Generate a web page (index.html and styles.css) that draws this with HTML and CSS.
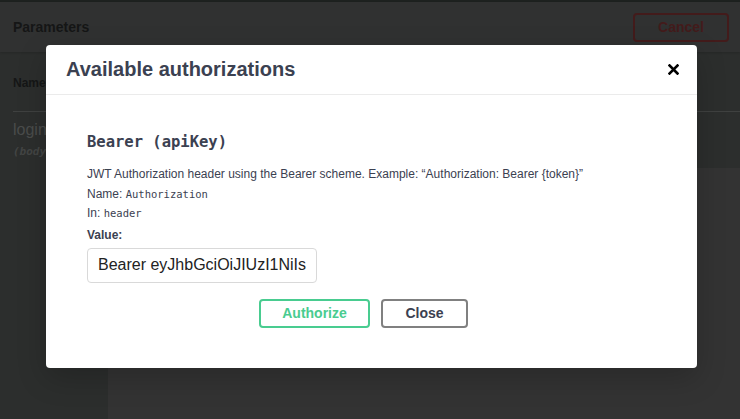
FILE: index.html
```html
<!DOCTYPE html>
<html>
<head>
<meta charset="utf-8">
<link rel="stylesheet" href="styles.css">
</head>
<body>
<div class="page">
  <div class="section-header">
    <span class="section-title">Parameters</span>
    <button class="btn-cancel">Cancel</button>
  </div>
  <div class="params">
    <div class="params-head"><span>Name</span></div>
    <div class="params-row">
      <div class="param-name">
        <div class="param-login">login</div>
        <div class="param-in">(body)</div>
      </div>
      <div class="param-body"></div>
    </div>
  </div>
</div>

<div class="modal" role="dialog">
  <div class="modal-header">
    <h3 class="modal-title">Available authorizations</h3>
    <button class="modal-close" aria-label="Close">
      <svg width="11" height="11" viewBox="0 0 11 11"><path d="M1.5 1.5 L9.5 9.5 M9.5 1.5 L1.5 9.5" stroke="#000" stroke-width="2.6" stroke-linecap="square"/></svg>
    </button>
  </div>
  <div class="modal-body">
    <h4 class="auth-title">Bearer (apiKey)</h4>
    <p class="auth-line">JWT Authorization header using the Bearer scheme. Example: “Authorization: Bearer {token}”</p>
    <p class="auth-line">Name: <code>Authorization</code></p>
    <p class="auth-line">In: <code>header</code></p>
    <label class="auth-label">Value:</label>
    <input class="auth-input" type="text" value="Bearer eyJhbGciOiJIUzI1NiIsInR5cCI6IkpXVCJ9">
    <div class="auth-actions">
      <button class="btn btn-authorize">Authorize</button>
      <button class="btn btn-close">Close</button>
    </div>
  </div>
</div>
</body>
</html>
```

FILE: styles.css
```css
html, body {
  margin: 0;
  padding: 0;
}
body {
  width: 740px;
  height: 419px;
  overflow: hidden;
  background: #2c2e2d;
  font-family: "Liberation Sans", Arial, sans-serif;
  position: relative;
}
.page {
  border-top: 2px solid #1d211f;
  height: 417px;
  display: flex;
  flex-direction: column;
}
.section-header {
  height: 50px;
  background: #303131;
  display: flex;
  align-items: center;
  justify-content: space-between;
  padding: 0 11px 0 13px;
  box-shadow: 0 1px 2px rgba(0,0,0,.15);
}
.section-title {
  font-size: 14px;
  font-weight: bold;
  color: #151616;
}
.btn-cancel {
  width: 96px;
  height: 29px;
  background: transparent;
  border: 2px solid #431b1b;
  border-radius: 4px;
  color: #431b1b;
  font-family: "Liberation Sans", Arial, sans-serif;
  font-size: 14px;
  font-weight: bold;
}
.params {
  flex: 1;
  display: flex;
  flex-direction: column;
  padding: 0 0 0 13px;
}
.params-head {
  height: 57px;
  border-bottom: 1px solid #3f4140;
  display: flex;
  align-items: center;
  padding-top: 2px;
  font-size: 12px;
  font-weight: bold;
  color: #151616;
}
.params-row {
  flex: 1;
  display: flex;
}
.param-name {
  width: 95px;
  padding-top: 9px;
}
.param-login {
  font-size: 16px;
  color: #4a4c4b;
}
.param-in {
  margin-top: 6px;
  font-family: "DejaVu Sans Mono", monospace;
  font-size: 11px;
  font-style: italic;
  font-weight: bold;
  color: #434544;
}
.param-body {
  flex: 1;
  margin-top: 56px;
  background: #333333;
}

.modal {
  position: absolute;
  left: 46px;
  top: 45px;
  width: 651px;
  height: 323px;
  background: #fff;
  border-radius: 4px;
  box-shadow: 0 10px 30px rgba(0,0,0,.2);
  display: flex;
  flex-direction: column;
}
.modal-header {
  height: 49px;
  border-bottom: 1px solid #ebebeb;
  display: flex;
  align-items: center;
  justify-content: space-between;
  padding: 0 18px 0 20px;
}
.modal-title {
  margin: 0;
  font-size: 20px;
  font-weight: bold;
  color: #3b4151;
}
.modal-close {
  background: none;
  border: 0;
  padding: 0;
  width: 11px;
  height: 11px;
  display: flex;
}
.modal-body {
  padding: 37px 41px 0;
  display: flex;
  flex-direction: column;
  align-items: flex-start;
  color: #3b4151;
}
.auth-title {
  margin: 0 0 13px;
  font-family: "DejaVu Sans Mono", monospace;
  font-size: 15.5px;
  font-weight: bold;
  color: #3b4151;
  line-height: 20px;
}
.auth-line {
  margin: 0;
  font-size: 12px;
  line-height: 19.5px;
}
.auth-line code {
  font-family: "DejaVu Sans Mono", monospace;
  font-size: 10.5px;
}
.auth-label {
  margin-top: 2px;
  font-size: 12px;
  font-weight: bold;
  line-height: 19px;
}
.auth-input {
  margin-top: 3px;
  width: 230px;
  height: 35px;
  box-sizing: border-box;
  border: 1px solid #d9d9d9;
  border-radius: 4px;
  padding: 0 10px;
  font-family: "Liberation Sans", Arial, sans-serif;
  font-size: 16px;
  color: #222;
  outline: none;
}
.auth-actions {
  align-self: stretch;
  display: flex;
  justify-content: center;
  gap: 11px;
  margin-top: 16px;
  padding-right: 16px;
}
.btn {
  height: 29px;
  box-sizing: border-box;
  background: #fff;
  border-radius: 4px;
  font-family: "Liberation Sans", Arial, sans-serif;
  font-size: 14px;
  font-weight: bold;
}
.btn-authorize {
  width: 111px;
  border: 2px solid #49cc90;
  color: #49cc90;
}
.btn-close {
  width: 87px;
  border: 2px solid #808080;
  color: #3b4151;
}
```
